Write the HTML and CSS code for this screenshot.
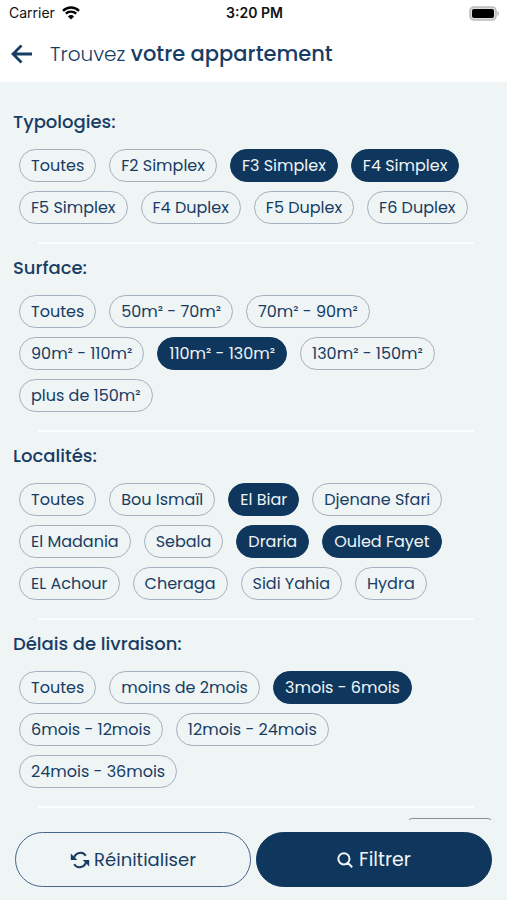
FILE: index.html
```
<!DOCTYPE html>
<html lang="fr">
<head>
<meta charset="utf-8">
<meta name="viewport" content="width=device-width, initial-scale=1">
<title>Trouvez votre appartement</title>
<link rel="stylesheet" href="styles.css">
</head>
<body>
<div class="status">
  <div class="carrier">Carrier
    <svg width="18" height="14" viewBox="0 0 18 14" aria-hidden="true"><path d="M1 4.8a11.5 11.5 0 0 1 16 0M3.8 7.7a7.5 7.5 0 0 1 10.4 0" fill="none" stroke="#000" stroke-width="2.4"/><path d="M9 13.6 5.9 10.4a4.5 4.5 0 0 1 6.2 0z"/></svg>
  </div>
  <div class="time">3:20 PM</div>
  <svg class="battery" width="31" height="15" viewBox="0 0 31 15" aria-hidden="true"><rect x="1" y="1" width="26" height="13" rx="4" fill="#ddd" stroke="#bbb" stroke-width="1.6"/><rect x="3" y="3" width="22" height="9" rx="2"/><path d="M28.5 5a3 3 0 0 1 0 5z" fill="#aaa"/></svg>
</div>
<header class="topbar">
  <button class="back" type="button" aria-label="Retour"><svg width="22" height="20" viewBox="0 0 22 20" aria-hidden="true"><path d="M10.500 1.500 2 10l8.500 8.500M2 10h19" fill="none" stroke="currentColor" stroke-width="2.800"/></svg></button>
  <h1>Trouvez <strong>votre appartement</strong></h1>
</header>
<main>
  <section>
    <h2>Typologies:</h2>
    <div class="chips">
      <button type="button" aria-pressed="false">Toutes</button>
      <button type="button" aria-pressed="false">F2 Simplex</button>
      <button type="button" aria-pressed="true">F3 Simplex</button>
      <button type="button" aria-pressed="true">F4 Simplex</button>
      <button type="button" aria-pressed="false">F5 Simplex</button>
      <button type="button" aria-pressed="false">F4 Duplex</button>
      <button type="button" aria-pressed="false">F5 Duplex</button>
      <button type="button" aria-pressed="false">F6 Duplex</button>
    </div>
  </section>
  <section>
    <h2>Surface:</h2>
    <div class="chips">
      <button type="button" aria-pressed="false">Toutes</button>
      <button type="button" aria-pressed="false">50m² - 70m²</button>
      <button type="button" aria-pressed="false">70m² - 90m²</button>
      <button type="button" aria-pressed="false">90m² - 110m²</button>
      <button type="button" aria-pressed="true">110m² - 130m²</button>
      <button type="button" aria-pressed="false">130m² - 150m²</button>
      <button type="button" aria-pressed="false">plus de 150m²</button>
    </div>
  </section>
  <section>
    <h2>Localités:</h2>
    <div class="chips">
      <button type="button" aria-pressed="false">Toutes</button>
      <button type="button" aria-pressed="false">Bou Ismaïl</button>
      <button type="button" aria-pressed="true">El Biar</button>
      <button type="button" aria-pressed="false">Djenane Sfari</button>
      <button type="button" aria-pressed="false">El Madania</button>
      <button type="button" aria-pressed="false">Sebala</button>
      <button type="button" aria-pressed="true">Draria</button>
      <button type="button" aria-pressed="true">Ouled Fayet</button>
      <button type="button" aria-pressed="false">EL Achour</button>
      <button type="button" aria-pressed="false">Cheraga</button>
      <button type="button" aria-pressed="false">Sidi Yahia</button>
      <button type="button" aria-pressed="false">Hydra</button>
    </div>
  </section>
  <section>
    <h2>Délais de livraison:</h2>
    <div class="chips">
      <button type="button" aria-pressed="false">Toutes</button>
      <button type="button" aria-pressed="false">moins de 2mois</button>
      <button type="button" aria-pressed="true">3mois - 6mois</button>
      <button type="button" aria-pressed="false">6mois - 12mois</button>
      <button type="button" aria-pressed="false">12mois - 24mois</button>
      <button type="button" aria-pressed="false">24mois - 36mois</button>
    </div>
  </section>
  <div class="next"></div>
</main>
<footer>
  <button class="action" type="button"><svg width="20" height="18" viewBox="0 0 20 18" aria-hidden="true"><path d="M4 7a6.500 6.500 0 0 1 11.800-2.200M16 11a6.500 6.500 0 0 1-11.800 2.200" fill="none" stroke="currentColor" stroke-width="2"/><path d="M.8 2.500V9h6.500zM19.200 15.500V9h-6.500z" fill="currentColor"/></svg>Réinitialiser</button>
  <button class="action filter" type="button"><svg width="16" height="16" viewBox="0 0 16 16" aria-hidden="true"><path d="M12.500 6.800a5.600 5.600 0 1 1-11.200 0 5.600 5.600 0 0 1 11.200 0zM10.800 10.800 15.200 15.200" fill="none" stroke="currentColor" stroke-width="2"/></svg>Filtrer</button>
</footer>
</body>
</html>
```
FILE: styles.css
```
* { box-sizing: border-box; }
body {
  margin: 0;
  height: 100vh;
  display: flex;
  flex-direction: column;
  background: #eff4f5;
  color: #173d64;
  font-family: Poppins, Inter, "Liberation Sans", sans-serif;
}
button { font: inherit; color: inherit; cursor: pointer; }
svg { flex: none; }
.status {
  display: grid;
  grid-template-columns: 1fr auto 1fr;
  align-items: center;
  height: 26px;
  padding: 0 7px 0 9px;
  background: #fff;
  color: #111;
  font: 14px/26px Inter, sans-serif;
}
.carrier { display: flex; align-items: center; gap: 7px; }
.time { font-weight: 600; }
.battery { justify-self: end; }
.topbar {
  display: flex;
  align-items: center;
  gap: 17px;
  height: 56px;
  padding: 0 11px;
  background: #fff;
}
.back { display: flex; padding: 0; border: 0; background: none; }
h1 { margin: 0; font-size: 20px; line-height: 30px; font-weight: 300; }
h1 strong { font-size: 21px; font-weight: 500; }
main { flex: 1; min-height: 0; overflow: auto; scrollbar-width: none; padding-top: 16px; }
section { padding: 12px 13px 0; }
h2 { margin: 0 0 15px; font-size: 18px; line-height: 24px; font-weight: 500; }
.chips { display: flex; flex-wrap: wrap; gap: 9px 13px; padding: 0 6px; }
.chips button {
  height: 33px;
  padding: 0 11px;
  border: 1px solid #a3b1bf;
  border-radius: 17px;
  background: none;
  font-size: 16px;
  line-height: 30px;
}
.chips button[aria-pressed="true"] { background: #0f375d; border-color: #0f375d; color: #eff4f6; }
section::after {
  content: "";
  display: block;
  height: 2px;
  margin: 18px 20px 0 25px;
  background: #fbfcfd;
}
.next {
  width: 84px;
  height: 40px;
  margin: 10px 15px 0 auto;
  border: 1px solid #8a8f93;
  border-radius: 4px;
}
footer { display: grid; grid-template-columns: 1fr 1fr; gap: 5px; padding: 12px 15px 13px; }
.action {
  display: flex;
  align-items: center;
  justify-content: center;
  gap: 4px;
  height: 55px;
  border: 1px solid #45658a;
  border-radius: 28px;
  background: none;
  font-size: 18px;
}
.filter { gap: 6px; background: #0f375d; border-color: #0f375d; color: #eff4f6; font-size: 19px; }
```
